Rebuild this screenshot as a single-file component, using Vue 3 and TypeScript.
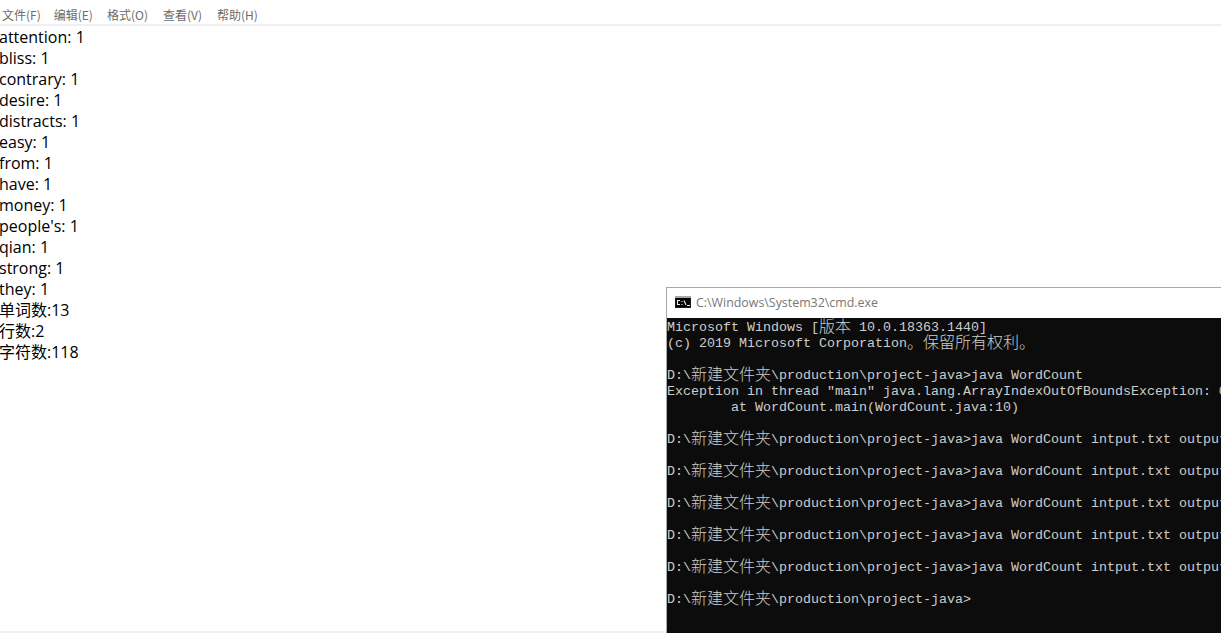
<script setup lang="ts">
const menus: string[] = ['文件(F)', '编辑(E)', '格式(O)', '查看(V)', '帮助(H)']
const words: string[] = [
  'attention: 1', 'bliss: 1', 'contrary: 1', 'desire: 1', 'distracts: 1', 'easy: 1', 'from: 1',
  'have: 1', 'money: 1', "people's: 1", 'qian: 1', 'strong: 1', 'they: 1', '单词数:13', '行数:2', '字符数:118',
]
const base = 'D:\\'
const path = '\\production\\project-java>'
const cmd = 'java WordCount intput.txt output.txt'
const trace = '        at WordCount.main(WordCount.java:10)'
</script>

<template>
  <div class="page">
    <nav class="menu">
      <span v-for="m in menus" :key="m">{{ m }}</span>
    </nav>
    <div class="doc">
      <div v-for="w in words" :key="w">{{ w }}</div>
    </div>
    <section class="console">
      <header class="title">
        <svg width="16" height="16" viewBox="0 0 16 16" class="icon">
          <rect x="0" y="2" width="16" height="12" fill="#1a1a1a" />
          <rect x="0" y="2" width="16" height="2" fill="#a8a8a8" />
          <rect x="1" y="4" width="14" height="9" fill="#000" />
          <path d="M5 6.500H2.500V10.500H5M7 7v1M7 10v1M9 6.500l2 4.500M12 11.500h3" stroke="#f0f0f0" stroke-width="1.100" fill="none" />
        </svg>
        <span>C:\Windows\System32\cmd.exe</span>
      </header>
      <div class="term">
        <div class="ln">Microsoft Windows [<i>版本</i> 10.0.18363.1440]</div>
        <div class="ln">(c) 2019 Microsoft Corporation<i>。保留所有权利。</i></div>
        <div class="ln">&nbsp;</div>
        <div class="ln">{{ base }}<i>新建文件夹</i>{{ path }}java WordCount</div>
        <div class="ln">Exception in thread "main" java.lang.ArrayIndexOutOfBoundsException: 0</div>
        <div class="ln">{{ trace }}</div>
        <template v-for="n in 5" :key="n">
          <div class="ln">&nbsp;</div>
          <div class="ln">{{ base }}<i>新建文件夹</i>{{ path }}{{ cmd }}</div>
        </template>
        <div class="ln">&nbsp;</div>
        <div class="ln">{{ base }}<i>新建文件夹</i>{{ path }}</div>
      </div>
    </section>
    <div class="edge"></div>
  </div>
</template>

<style>
html, body { margin: 0; background: #fff; overflow: hidden; }
</style>

<style scoped>
.page {
  position: relative;
  width: 1221px;
  height: 633px;
  overflow: hidden;
  background: #fff;
  font-family: "Open Sans", "Noto Sans CJK SC", sans-serif;
}
.menu {
  height: 26px;
  box-sizing: border-box;
  padding: 6px 0 0 2px;
  display: flex;
  gap: 14px;
  font-size: 12px;
  line-height: 17px;
  color: #6b6b6b;
  border-bottom: 2px solid #f0f0f0;
  font-family: "Noto Sans CJK SC", sans-serif;
}
.menu span { white-space: nowrap; }
.menu span:first-child { margin-right: -1px; }
.menu span:nth-child(3),
.menu span:nth-child(4) { margin-right: 1px; }
.doc {
  padding-top: 1px;
  margin-left: -1px;
  font-size: 16px;
  line-height: 21px;
  color: #000;
}
.console {
  position: absolute;
  left: 666px;
  top: 287px;
  width: 600px;
  height: 360px;
  box-sizing: border-box;
  border: 1px solid #a8a8a8;
  background: #0c0c0c;
}
.title {
  height: 30px;
  padding-bottom: 2px;
  box-sizing: border-box;
  background: #fff;
  display: flex;
  align-items: center;
  gap: 5px;
  padding-left: 8px;
  font-size: 12.4px;
  color: #777;
  font-family: "Open Sans", sans-serif;
}
.icon { flex: none; }
.term {
  padding-top: 2px;
  color: #cccccc;
  font-family: "Liberation Mono", "Noto Sans CJK SC", monospace;
  font-size: 13.33px;
  line-height: 16px;
  white-space: pre;
}
.ln { height: 16px; }
.ln i {
  font-style: normal;
  font-family: "Noto Sans CJK SC", sans-serif;
  font-weight: 300;
  font-size: 16px;
  line-height: 0;
  vertical-align: -1px;
}
.edge {
  position: absolute;
  left: 0;
  right: 555px;
  bottom: 0;
  height: 2px;
  background: #f0f0f0;
}
</style>
